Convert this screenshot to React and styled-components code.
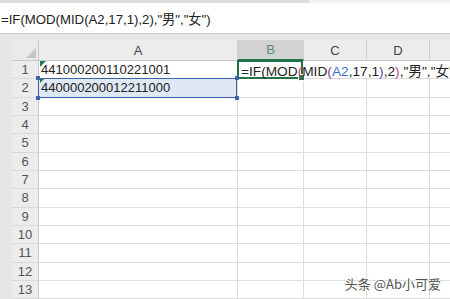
import React from 'react'
import styled, { createGlobalStyle } from 'styled-components'

const GlobalStyle = createGlobalStyle`
  html, body {
    margin: 0;
    padding: 0;
    width: 450px;
    height: 299px;
    overflow: hidden;
    background: #e6e6e6;
  }
`

const FONT = `"Liberation Sans", "Noto Sans CJK SC", sans-serif`
const ROW_H = 18.33
const COLS = [
  { key: 'A', width: 199 },
  { key: 'B', width: 66 },
  { key: 'C', width: 63 },
  { key: 'D', width: 63 },
  { key: 'E', width: 40 },
]

const Page = styled.div`
  width: 450px;
  height: 299px;
  position: relative;
  overflow: hidden;
  font-family: ${FONT};
  background: #e6e6e6;
`

const TopStrip = styled.div`
  display: flex;
  height: 3px;
`

const StripPart = styled.div`
  flex: ${p => (p.grow ? 1 : 'none')};
  width: ${p => p.w || 'auto'};
  background: ${p => p.bg};
`

const FormulaBar = styled.div`
  height: 30px;
  background: #fff;
  border-bottom: 1px solid #c9c9c9;
  display: flex;
  align-items: center;
  padding-left: 1px;
  font-size: 13.2px;
  color: #222;
  white-space: nowrap;
`

const Spacer = styled.div`
  height: 6px;
`

const Sheet = styled.div`
  display: grid;
  grid-template-columns: 12px 27px ${COLS.map(c => c.width + 'px').join(' ')};
  grid-template-rows: 21px repeat(13, ${ROW_H}px);
`

const Margin = styled.div`
  grid-column: 1;
  grid-row: 1 / span 14;
  background: #e6e6e6;
`

const Corner = styled.div`
  position: relative;
  background: #eaeaea;
  border-right: 1px solid #c8c8c8;
  border-bottom: 1px solid #c8c8c8;
  &::after {
    content: '';
    position: absolute;
    right: 2px;
    bottom: 2px;
    width: 0;
    height: 0;
    border-left: 10px solid transparent;
    border-bottom: 10px solid #c4c4c4;
  }
`

const ColHead = styled.div`
  background: ${p => (p.active ? '#d2d2d2' : '#ececec')};
  color: ${p => (p.active ? '#5b8a6e' : '#444')};
  border-right: 1px solid #cfcfcf;
  border-bottom: ${p => (p.active ? '2px solid #217346' : '1px solid #c8c8c8')};
  display: flex;
  align-items: flex-end;
  justify-content: center;
  padding-bottom: 2px;
  font-size: 13px;
  box-sizing: border-box;
`

const RowHead = styled.div`
  background: #ececec;
  color: #555;
  border-right: 1px solid #c8c8c8;
  border-bottom: 1px solid #dadada;
  display: flex;
  align-items: center;
  justify-content: center;
  font-size: 13px;
  box-sizing: border-box;
`

const Cell = styled.div`
  position: relative;
  background: ${p => (p.fill ? '#dfe8f5' : '#fff')};
  border-right: ${p => (p.open ? 'none' : '1px solid #dcdcdc')};
  border-bottom: 1px solid #dcdcdc;
  box-sizing: border-box;
  display: flex;
  align-items: center;
  padding-left: 2px;
  font-size: 13px;
  color: #222;
  white-space: nowrap;
`

const Overflow = styled.span`
  position: relative;
  z-index: 4;
  font-size: 13.7px;
  padding-left: 1px;
`

const Flag = styled.span`
  position: absolute;
  left: 1px;
  top: 0;
  width: 0;
  height: 0;
  border-top: ${p => (p.small ? 4 : 6)}px solid #1f7a45;
  border-right: ${p => (p.small ? 4 : 6)}px solid transparent;
`

const ActiveBox = styled.div`
  position: absolute;
  left: -1px;
  top: -1px;
  right: 1px;
  bottom: -1px;
  border: 2px solid #217346;
  z-index: 3;
  pointer-events: none;
  &::after {
    content: '';
    position: absolute;
    right: -4px;
    bottom: -4px;
    width: 5px;
    height: 5px;
    background: #217346;
    border: 1px solid #fff;
  }
`

const RangeBox = styled.div`
  position: absolute;
  inset: -1px 0 -1px -1px;
  border: 1.5px solid #3c5fae;
  z-index: 3;
  pointer-events: none;
`

const Knob = styled.span`
  position: absolute;
  width: 4px;
  height: 4px;
  background: #3c5fae;
  ${p => (p.top ? 'top: -3px;' : 'bottom: -3px;')}
  ${p => (p.left ? 'left: -3px;' : 'right: -3px;')}
`

const Ref = styled.span`
  color: #3a6fd0;
`

const Paren = styled.span`
  color: ${p => p.c};
`

const Watermark = styled.div`
  position: absolute;
  right: 9px;
  bottom: 6px;
  font-family: "Noto Sans CJK SC", sans-serif;
  font-size: 13px;
  color: #555;
  text-shadow: 0 0 2px #fff, 0 0 2px #fff;
`

const FORMULA = '=IF(MOD(MID(A2,17,1),2),"男","女")'

const ColoredFormula = () => (
  <>
    =IF(MOD<Paren c="#b8437d">(</Paren>MID<Paren c="#7b3fa0">(</Paren>
    <Ref>A2</Ref>,17,1<Paren c="#7b3fa0">)</Paren>,2<Paren c="#b8437d">)</Paren>,"男","女")
  </>
)

const values = {
  '1A': '441000200110221001',
  '2A': '440000200012211000',
}

export default function App() {
  const rows = Array.from({ length: 13 }, (_, i) => i + 1)
  return (
    <Page>
      <GlobalStyle />
      <TopStrip>
        <StripPart w="309px" bg="#dcdcdc" />
        <StripPart grow bg="#f2f2f2" />
      </TopStrip>
      <FormulaBar>{FORMULA}</FormulaBar>
      <Spacer />
      <Sheet>
        <Margin />
        <Corner />
        {COLS.map(c => (
          <ColHead key={c.key} active={c.key === 'B'}>
            {c.key === 'E' ? '' : c.key}
          </ColHead>
        ))}
        {rows.map(r => (
          <React.Fragment key={r}>
            <RowHead>{r}</RowHead>
            {COLS.map(c => {
              const id = r + c.key
              const isB1 = id === '1B'
              const isA2 = id === '2A'
              const open = r === 1 && ['B', 'C', 'D'].includes(c.key)
              return (
                <Cell key={id} fill={isA2} open={open}>
                  {values[id] && <Flag small={isA2} />}
                  {values[id]}
                  {isB1 && (
                    <>
                      <Overflow><ColoredFormula /></Overflow>
                      <ActiveBox />
                    </>
                  )}
                  {isA2 && (
                    <RangeBox>
                      <Knob top left />
                      <Knob top />
                      <Knob left />
                      <Knob />
                    </RangeBox>
                  )}
                </Cell>
              )
            })}
          </React.Fragment>
        ))}
      </Sheet>
      <Watermark>头条 @Ab小可爱</Watermark>
    </Page>
  )
}
